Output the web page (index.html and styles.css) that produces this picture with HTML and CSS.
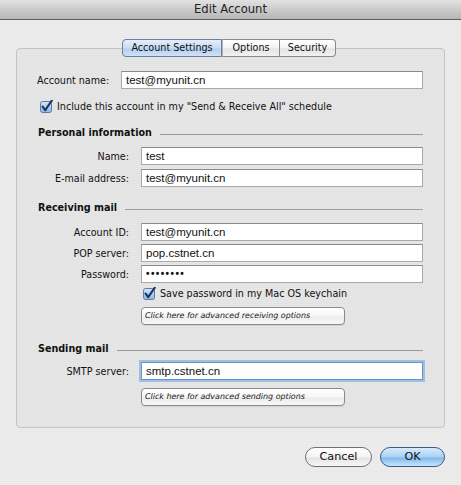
FILE: index.html
```html
<!DOCTYPE html>
<html>
<head>
<meta charset="utf-8">
<title>Edit Account</title>
<link rel="stylesheet" href="styles.css">
</head>
<body>
<div class="window">
    <div class="titlebar">Edit Account</div>
    <div class="content">
        <div class="tabs">
            <span class="tab tab-account active">Account Settings</span>
            <span class="tab tab-options">Options</span>
            <span class="tab tab-security">Security</span>
        </div>
        <div class="group">
            <div class="row row-top">
                <label class="lbl-left">Account name:</label>
                <div class="field">test@myunit.cn</div>
            </div>
            <div class="check-row include">
                <svg class="checkbox" width="13" height="13" viewBox="0 0 13 13">
                    <defs>
                        <linearGradient id="cb1" x1="0" y1="0" x2="0" y2="1">
                            <stop offset="0" stop-color="#d6e6f7"/>
                            <stop offset="1" stop-color="#8fb6e2"/>
                        </linearGradient>
                    </defs>
                    <rect x="0.5" y="1.5" width="11" height="11" rx="2" fill="url(#cb1)" stroke="#5b7ca6"/>
                    <path d="M2.6 6.6 L5.2 10.2 L11.8 0.6" fill="none" stroke="#1c3560" stroke-width="2.1" stroke-linecap="round" stroke-linejoin="round"/>
                </svg>
                <span>Include this account in my "Send &amp; Receive All" schedule</span>
            </div>

            <div class="section s-personal">Personal information</div>
            <div class="row r-name">
                <label class="lbl">Name:</label>
                <div class="field">test</div>
            </div>
            <div class="row r-mail">
                <label class="lbl">E-mail address:</label>
                <div class="field">test@myunit.cn</div>
            </div>

            <div class="section s-receiving">Receiving mail</div>
            <div class="row r-id">
                <label class="lbl">Account ID:</label>
                <div class="field">test@myunit.cn</div>
            </div>
            <div class="row r-pop">
                <label class="lbl">POP server:</label>
                <div class="field">pop.cstnet.cn</div>
            </div>
            <div class="row r-pass">
                <label class="lbl">Password:</label>
                <div class="field dots">&bull;&bull;&bull;&bull;&bull;&bull;&bull;&bull;</div>
            </div>
            <div class="check-row keychain">
                <svg class="checkbox" width="13" height="13" viewBox="0 0 13 13">
                    <defs>
                        <linearGradient id="cb2" x1="0" y1="0" x2="0" y2="1">
                            <stop offset="0" stop-color="#d6e6f7"/>
                            <stop offset="1" stop-color="#8fb6e2"/>
                        </linearGradient>
                    </defs>
                    <rect x="0.5" y="1.5" width="11" height="11" rx="2" fill="url(#cb2)" stroke="#5b7ca6"/>
                    <path d="M2.6 6.6 L5.2 10.2 L11.8 0.6" fill="none" stroke="#1c3560" stroke-width="2.1" stroke-linecap="round" stroke-linejoin="round"/>
                </svg>
                <span>Save password in my Mac OS keychain</span>
            </div>
            <div class="adv adv-recv">Click here for advanced receiving options</div>

            <div class="section s-sending">Sending mail</div>
            <div class="row r-smtp">
                <label class="lbl">SMTP server:</label>
                <div class="field focus">smtp.cstnet.cn</div>
            </div>
            <div class="adv adv-send">Click here for advanced sending options</div>
        </div>
        <div class="buttons">
            <span class="btn cancel">Cancel</span>
            <span class="btn ok">OK</span>
        </div>
    </div>
</div>
</body>
</html>
```
FILE: styles.css
```css
* { margin: 0; padding: 0; box-sizing: border-box; }
body { font-family: "DejaVu Sans", Verdana, sans-serif; font-size: 9.6px; color: #111; background: #ececec; }
.window { width: 461px; height: 485px; overflow: hidden;
    background: repeating-linear-gradient(0deg, #ededed 0, #ededed 1px, #e8e8e8 1px, #e8e8e8 2px); }

/* title bar */
.titlebar { height: 20px; line-height: 19px; text-align: center; font-size: 11.6px; color: #222;
    background: linear-gradient(#e2e2e2, #cbcbcb 50%, #b6b6b6); border-bottom: 1px solid #5c5c5c; }

.content { padding: 19px 16px 0 16px; }

/* segmented tabs */
.tabs { display: flex; justify-content: center; position: relative; z-index: 1; margin-left: -3px; }
.tab { display: block; height: 18px; line-height: 16px; text-align: center; color: #111;
    border: 1px solid #8a8a8a; border-left: none; background: linear-gradient(#ffffff, #f3f3f3 50%, #e4e4e4 55%, #f1f1f1); }
.tab-account { width: 100px; border-left: 1px solid #6d7f98; border-radius: 4px 0 0 4px; border-color: #6d7f98;
    background: linear-gradient(#e3eefa, #c7dcf3 50%, #b2cfef 55%, #cfe3f7); }
.tab-options { width: 58px; border-left: 1px solid #b0b0b0; }
.tab-security { width: 56px; border-radius: 0 4px 4px 0; }

/* group box */
.group { margin-top: -9px; height: 380px; padding: 22px 21px 0 20px; border: 1px solid #c4c4c4; border-radius: 4px;
    background: rgba(0,0,0,0.025); }

.row { display: flex; align-items: center; height: 18px; }
.lbl-left { width: 84px; }
.lbl { width: 104px; padding-right: 12px; text-align: right; }
.field { flex: 1; height: 18px; line-height: 16px; padding-left: 4px; background: #fff;
    font-family: "Liberation Sans", Arial, sans-serif; font-size: 11.5px; color: #111;
    border: 1px solid #a9a9a9; border-top-color: #8a8a8a; }
.dots { font-size: 10px; letter-spacing: 1.4px; font-weight: bold; }
.focus { border: 1px solid #6d93c4; box-shadow: 0 0 0 2px #9fc0e6; }

.check-row { display: flex; align-items: center; height: 14px; }
.check-row span { margin-left: 4px; }
.include { margin-top: 10px; padding-left: 3px; }
.keychain { margin-top: 3px; padding-left: 106px; }

.section { display: flex; align-items: center; height: 12px; font-weight: bold; padding-left: 1px; }
.section::after { content: ""; flex: 1; height: 1px; margin: 4px 0 0 8px; background: #9d9d9d; }
.s-personal { margin-top: 13px; }
.s-receiving { margin-top: 14px; }
.s-sending { margin-top: 17px; }

.r-name { margin-top: 9px; }
.r-mail { margin-top: 4px; }
.r-id { margin-top: 10px; }
.r-pop, .r-pass { margin-top: 3px; }
.r-smtp { margin-top: 8px; }

/* advanced buttons */
.adv { width: 204px; height: 18px; line-height: 16px; margin-left: 104px; padding-left: 3px;
    font-style: italic; font-size: 7.95px; color: #1a1a1a; border: 1px solid #8a8a8a; border-radius: 4px;
    background: linear-gradient(#ffffff, #f6f6f6 50%, #ebebeb 55%, #f8f8f8); box-shadow: 0 1px 0 rgba(0,0,0,0.08); }
.adv-recv { margin-top: 7px; }
.adv-send { margin-top: 8px; }

/* bottom buttons */
.buttons { display: flex; justify-content: flex-end; gap: 8px; margin-top: 19px; }
.btn { display: block; height: 20px; line-height: 18px; text-align: center; font-size: 11.2px; color: #111;
    border-radius: 10px; }
.cancel { width: 67px; border: 1px solid #6f6f6f;
    background: linear-gradient(#ffffff, #f4f4f4 50%, #e3e3e3 55%, #f7f7f7); }
.ok { width: 65px; border: 1px solid #3a5a88;
    background: linear-gradient(#d8ebfc, #a9d0f4 50%, #80b8ec 55%, #c7e5fc); }
```
